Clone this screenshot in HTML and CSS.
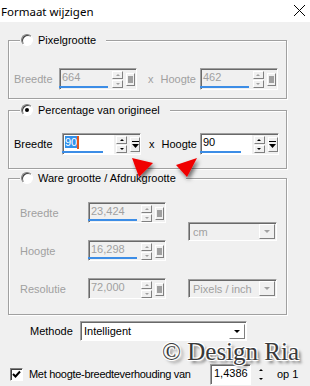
FILE: index.html
```html
<!DOCTYPE html>
<html lang="nl">
<head>
    <meta charset="UTF-8">
    <meta name="viewport" content="width=device-width, initial-scale=1.0">
    <title>Formaat wijzigen</title>
    <link rel="stylesheet" href="styles.css">
</head>
<body>
    <div class="titlebar">
        <span class="title">Formaat wijzigen</span>
        <svg class="close" width="13" height="13" viewBox="0 0 13 13"><path d="M1 1L12 12M12 1L1 12" stroke="#000" stroke-width="1"/></svg>
    </div>

    <div class="group g1">
        <div class="legend"><span class="radio"></span><span>Pixelgrootte</span></div>
        <div class="row dis">
            <span class="lbl l1">Breedte</span>
            <div class="spinbox">
                <span class="field ul">664</span>
                <span class="spin"><i class="up"></i><i class="dn"></i></span>
                <span class="sq"><i class="dot"></i></span>
            </div>
            <span class="x x1">x</span>
            <span class="lbl">Hoogte</span>
            <div class="spinbox h1">
                <span class="field ul">462</span>
                <span class="spin"><i class="up"></i><i class="dn"></i></span>
                <span class="sq"><i class="dot"></i></span>
            </div>
        </div>
    </div>

    <div class="group g2">
        <div class="legend"><span class="radio on"></span><span>Percentage van origineel</span></div>
        <div class="row">
            <span class="lbl l2">Breedte</span>
            <div class="spinbox on">
                <span class="field ul short"><span class="sel">90</span><span class="caret"></span></span>
                <span class="spin"><i class="up"></i><i class="dn"></i></span>
                <span class="sq"><svg width="7" height="8" viewBox="0 0 7 8"><rect x="0" y="0" width="7" height="1" fill="#000"/><path d="M0 3H7L3.5 7Z" fill="#000"/></svg></span>
            </div>
            <span class="x x2">x</span>
            <span class="lbl">Hoogte</span>
            <div class="spinbox on h2">
                <span class="field ul short">90</span>
                <span class="spin"><i class="up"></i><i class="dn"></i></span>
                <span class="sq"><svg width="7" height="8" viewBox="0 0 7 8"><rect x="0" y="0" width="7" height="1" fill="#000"/><path d="M0 3H7L3.5 7Z" fill="#000"/></svg></span>
            </div>
        </div>
    </div>

    <div class="group g3">
        <div class="legend"><span class="radio"></span><span>Ware grootte / Afdrukgrootte</span></div>
        <div class="grid dis">
            <span class="lbl">Breedte</span>
            <div class="spinbox">
                <span class="field ul">23,424</span>
                <span class="spin"><i class="up"></i><i class="dn"></i></span>
                <span class="sq"><i class="dot"></i></span>
            </div>
            <div class="combo unit"><span>cm</span><span class="arrow"><i></i></span></div>
            <span class="lbl">Hoogte</span>
            <div class="spinbox">
                <span class="field ul">16,298</span>
                <span class="spin"><i class="up"></i><i class="dn"></i></span>
                <span class="sq"><i class="dot"></i></span>
            </div>
            <span class="lbl">Resolutie</span>
            <div class="spinbox">
                <span class="field">72,000</span>
                <span class="spin"><i class="up"></i><i class="dn"></i></span>
                <span class="sq"><i class="dot"></i></span>
            </div>
            <div class="combo"><span>Pixels / inch</span><span class="arrow"><i></i></span></div>
        </div>
    </div>

    <div class="method">
        <span class="mlbl">Methode</span>
        <div class="combo wide"><span>Intelligent</span><span class="arrow"><i></i></span></div>
    </div>

    <div class="ratio">
        <span class="check"><svg width="9" height="9" viewBox="0 0 9 9"><path d="M1 4L3.5 6.5L8 1.5" stroke="#000" stroke-width="2" fill="none"/></svg></span>
        <span class="rtext">Met hoogte-breedteverhouding van</span>
        <span class="rfield">1,4386</span>
        <span class="spin on"><i class="up"></i><i class="dn"></i></span>
        <span class="op">op 1</span>
    </div>

    <svg class="marks" width="310" height="386" viewBox="0 0 310 386">
        <defs>
            <filter id="sh" x="-50%" y="-50%" width="200%" height="200%">
                <feDropShadow dx="2" dy="3" stdDeviation="2" flood-color="#000" flood-opacity="0.55"/>
            </filter>
        </defs>
        <polygon points="132,158 153,163 139,177" fill="#f00000" filter="url(#sh)"/>
        <polygon points="197,158 176,165 187,177" fill="#f00000" filter="url(#sh)"/>
    </svg>
    <div class="watermark">© Design Ria</div>
</body>
</html>
```

FILE: styles.css
```css
body {
    margin: 0;
    width: 310px;
    height: 386px;
    overflow: hidden;
    position: relative;
    background-color: #f0f0f0;
    font-family: 'Liberation Sans', Arial, sans-serif;
    font-size: 11px;
    color: #000;
}
.titlebar {
    height: 22px;
    background-color: #fff;
    display: flex;
    align-items: center;
    justify-content: space-between;
    padding: 0 4px 0 1px;
}
.title {
    font-family: 'Noto Sans', sans-serif;
    font-size: 11.5px;
}
.close {
    margin-top: -2px;
}
.group {
    border: 1px solid #a0a0a0;
    box-shadow: inset 1px 1px 0 #fff, 1px 1px 0 #fff;
    margin: 0 23px 0 8px;
    display: flex;
    flex-direction: column;
}
.g1 {
    margin-top: 18px;
    padding-bottom: 8px;
}
.g2 {
    margin-top: 11px;
    padding-bottom: 13px;
}
.g3 {
    margin-top: 9px;
    padding-bottom: 15px;
}
.legend {
    display: flex;
    align-items: center;
    gap: 5px;
    width: max-content;
    height: 16px;
    margin: -9px 0 0 11px;
    padding: 0 10px 0 1px;
    background-color: #f0f0f0;
}
.radio {
    width: 12px;
    height: 12px;
    box-sizing: border-box;
    border-radius: 50%;
    background-color: #fff;
    border: 1px solid;
    border-color: #808080 #fff #fff #808080;
    box-shadow: inset 1px 1px 0 #404040;
    display: flex;
    align-items: center;
    justify-content: center;
}
.radio.on::after {
    content: "";
    width: 4px;
    height: 4px;
    border-radius: 50%;
    background-color: #000;
}
.row {
    display: flex;
    align-items: center;
    padding-left: 5px;
}
.g1 .row {
    margin-top: 20px;
}
.g2 .row {
    margin-top: 15px;
}
.dis .lbl,
.dis .x,
.dis .field,
.dis .combo span {
    color: #a0a0a0;
}
.l1 {
    width: 45px;
}
.l2 {
    width: 48px;
}
.x1 {
    margin: 0 7px 0 11px;
}
.x2 {
    margin: 0 7px 0 8px;
}
.h1 {
    margin-left: 4px;
}
.h2 {
    margin-left: 3px;
}
.spinbox {
    width: 78px;
    height: 22px;
    box-sizing: border-box;
    border: 1px solid;
    border-color: #a0a0a0 #fff #fff #a0a0a0;
    box-shadow: inset 1px 1px 0 #696969;
    padding: 1px 0 0 1px;
    display: flex;
    align-items: center;
}
.spinbox.on {
    width: 79px;
}
.field {
    position: relative;
    width: 47px;
    height: 100%;
    box-sizing: border-box;
    padding: 1px 0 0 1px;
    display: flex;
    align-items: flex-start;
}
.on .field {
    background-color: #fff;
    width: 50px;
}
.field.ul::after {
    content: "";
    position: absolute;
    left: -2px;
    bottom: 1px;
    width: 49px;
    height: 2px;
    background-color: #3c8de6;
}
.field.short::after {
    width: 41px;
}
.sel {
    background-color: #3390ea;
    color: #fff;
}
.caret {
    width: 2px;
    height: 13px;
    background-color: #e3561b;
}
.spin {
    display: flex;
    flex-direction: column;
    gap: 1px;
    margin-left: 4px;
}
.on .spin {
    margin-left: 2px;
}
.spin i {
    width: 11px;
    height: 8px;
    box-sizing: border-box;
    border: 1px solid;
    border-color: #fff #808080 #808080 #fff;
    background-color: #f0f0f0;
    display: flex;
    align-items: center;
    justify-content: center;
}
.spin i::after {
    content: "";
    border-left: 2px solid transparent;
    border-right: 2px solid transparent;
}
.spin .up::after {
    border-bottom: 2px solid #a0a0a0;
}
.spin .dn::after {
    border-top: 2px solid #a0a0a0;
}
.on .spin .up::after,
.spin.on .up::after {
    border-bottom-color: #000;
}
.on .spin .dn::after,
.spin.on .dn::after {
    border-top-color: #000;
}
.sq {
    width: 9px;
    height: 13px;
    margin-left: 3px;
    box-sizing: border-box;
    border: 1px solid;
    border-color: #fff #808080 #808080 #fff;
    display: flex;
    align-items: center;
    justify-content: center;
}
.on .sq {
    width: 10px;
    height: 15px;
}
.dot {
    width: 5px;
    height: 7px;
    background-color: #a0a0a0;
}
.grid {
    display: grid;
    grid-template-columns: 46px 78px 89px;
    grid-template-rows: 21px 21px 21px;
    column-gap: 22px;
    row-gap: 17px;
    align-items: center;
    margin-top: 16px;
    padding-left: 11px;
}
.grid .spinbox {
    height: 21px;
}
.combo {
    height: 19px;
    box-sizing: border-box;
    border: 1px solid;
    border-color: #a0a0a0 #fff #fff #a0a0a0;
    box-shadow: inset 1px 1px 0 #696969;
    display: flex;
    align-items: center;
    padding: 0 1px 0 4px;
}
.unit {
    grid-column: 3;
    grid-row: 1 / span 2;
}
.arrow {
    margin-left: auto;
    width: 16px;
    height: 15px;
    box-sizing: border-box;
    border: 1px solid;
    border-color: #fff #808080 #808080 #fff;
    display: flex;
    align-items: center;
    justify-content: center;
}
.arrow i {
    border-left: 3px solid transparent;
    border-right: 3px solid transparent;
    border-top: 3px solid #a0a0a0;
}
.method {
    display: flex;
    align-items: center;
    margin-top: 6px;
    padding-left: 30px;
}
.mlbl {
    width: 50px;
}
.combo.wide {
    width: 167px;
    height: 20px;
    background-color: #fff;
    padding-left: 3px;
}
.wide .arrow i {
    border-top-color: #000;
}
.ratio {
    display: flex;
    align-items: center;
    height: 22px;
    margin-top: 22px;
    padding-left: 10px;
    white-space: nowrap;
}
.ratio > * {
    flex-shrink: 0;
}
.check {
    width: 13px;
    height: 13px;
    box-sizing: border-box;
    background-color: #fff;
    border: 1px solid;
    border-color: #808080 #fff #fff #808080;
    box-shadow: inset 1px 1px 0 #404040;
    display: flex;
    align-items: center;
    justify-content: center;
}
.rtext {
    margin-left: 6px;
    width: 181px;
    letter-spacing: -0.3px;
}
.rfield {
    width: 41px;
    height: 21px;
    box-sizing: border-box;
    background-color: #fff;
    border: 1px solid;
    border-color: #a0a0a0 #fff #fff #a0a0a0;
    box-shadow: inset 1px 1px 0 #696969;
    padding: 2px 0 0 3px;
}
.ratio .spin {
    margin-left: 4px;
}
.ratio .spin i {
    border-color: #f0f0f0;
}
.op {
    margin-left: 11px;
}
.marks {
    position: absolute;
    left: 0;
    top: 0;
    pointer-events: none;
}
.watermark {
    position: absolute;
    left: 162px;
    top: 339px;
    font-family: 'Liberation Serif', 'Times New Roman', serif;
    font-size: 25px;
    line-height: 25px;
    color: #3a3a3a;
    text-shadow: -1px -1px 0 #fff, 1px -1px 0 #fff, -1px 1px 0 #fff, 1px 1px 0 #fff, 3px 3px 3px rgba(0, 0, 0, 0.55);
    white-space: nowrap;
}
```
